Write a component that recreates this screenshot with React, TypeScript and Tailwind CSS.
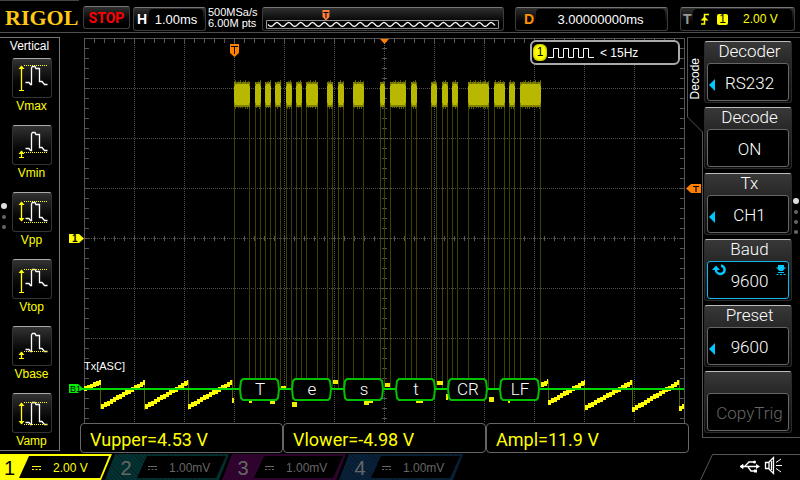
import { ReactNode } from "react";
import clsx from "clsx";

type Measure = {
  label: string;
  top: number;
  bottom: number;
  lines: number[];
  arrow: [number, number];
  double?: boolean;
};

const MEASURES: Measure[] = [
  { label: "Vmax", top: 8, bottom: 27, lines: [7], arrow: [8, 32] },
  { label: "Vmin", top: 7, bottom: 26, lines: [27], arrow: [26, 32] },
  { label: "Vpp", top: 10, bottom: 29, lines: [9, 30], arrow: [10, 29], double: true },
  { label: "Vtop", top: 10, bottom: 27, lines: [10], arrow: [11, 33] },
  { label: "Vbase", top: 7, bottom: 26, lines: [25], arrow: [26, 32] },
  { label: "Vamp", top: 9, bottom: 32, lines: [9, 31], arrow: [10, 31], double: true },
];

const CHANNELS = [
  {
    id: "2",
    hatch: "bg-[repeating-linear-gradient(45deg,#003434_0_2px,#0c2222_2px_3px)]",
  },
  {
    id: "3",
    hatch: "bg-[repeating-linear-gradient(45deg,#340034_0_2px,#220c22_2px_3px)]",
  },
  {
    id: "4",
    hatch: "bg-[repeating-linear-gradient(45deg,#06223c_0_2px,#0c1826_2px_3px)]",
  },
];

// Start and end of every high burst on the trace
const BURSTS = [
  [234, 250], [255, 261], [265, 271], [275, 281], [286, 292], [296, 302], [306, 318],
  [327, 333], [338, 344], [353, 364], [380, 385], [390, 406], [411, 417], [431, 437],
  [442, 448], [452, 458], [468, 489], [494, 505], [509, 515], [520, 541],
];

// x1, y1, x2, y2 of each rising ramp
const RAMPS = [
  [84, 389, 101, 382], [101, 407, 145, 382], [145, 407, 188, 382], [188, 407, 232, 382],
  [541, 385, 548, 382], [548, 403, 585, 382], [585, 408, 632, 382], [632, 410, 679, 382],
  [679, 409, 684, 406],
];

// Bits of the low level that show around the decoded frames
const SCRAPS = [
  [232, 398, 2, 5], [249, 400, 3, 3], [270, 400, 5, 4], [281, 386, 5, 4], [292, 402, 5, 5],
  [333, 380, 5, 4], [364, 401, 5, 4], [369, 400, 4, 3], [385, 383, 5, 4], [416, 400, 7, 3],
  [437, 381, 6, 4], [446, 394, 2, 6], [489, 397, 5, 5], [508, 401, 2, 2],
];

const FRAMES = ["T", "e", "s", "t", "CR", "LF"];

const range = (n: number) => Array.from({ length: n }, (_, i) => i);

function rampPath([x1, y1, x2, y2]: number[]) {
  const step = 3;
  let d = "";
  for (let x = x1; x < x2; x += step) {
    const w = Math.min(step, x2 - x);
    const y = Math.round(y1 + ((y2 - y1) * (x - x1)) / (x2 - x1)) - 3;
    d += `M${x} ${y}h${w}v5h${-w}z`;
  }
  return d;
}

function fringePath([a, b]: number[]) {
  let d = "";
  for (let x = a + 1; x < b; x++) {
    const up = (x * 7) % 5;
    if (up < 3) d += `M${x} ${80 + up}h1v2h-1z`;
    if ((x * 11) % 7 < 3) d += `M${x} 107h1v${1 + (x % 2)}h-1z`;
  }
  return d;
}

function MeasureIcon({ top: t, bottom: b, lines, arrow: [a1, a2], double }: Measure) {
  return (
    <svg viewBox="0 0 38 38" className="w-full h-full" fill="none">
      <g transform="translate(-1 -1)">
        <path
          d={`M13.500 ${b - 2.5}h3.500l1.500 2h1V${t + 2}l1 -1.500h2.500l1 2h3.500V${b - 3.5}h2.500l2.500 3h3`}
          stroke="#fff"
          strokeWidth="1.300"
        />
        {lines.map((y) => (
          <path key={y} d={`M12 ${y + 0.5}H36`} stroke="#ff0" strokeDasharray="1 1" />
        ))}
        <path d={`M9.500 ${a1}V${a2}`} stroke="#ff0" strokeWidth="1.300" />
        <path d={`M6.500 ${a1 + 3}L9.500 ${a1 - 0.5}L12.500 ${a1 + 3}z`} fill="#ff0" />
        {double ? (
          <path d={`M6.500 ${a2 - 3}L9.500 ${a2 + 0.5}L12.500 ${a2 - 3}z`} fill="#ff0" />
        ) : (
          <path d={`M7 ${a2 + 0.5}h5`} stroke="#ff0" />
        )}
      </g>
    </svg>
  );
}

function PageDots({ count, className }: { count: number; className: string }) {
  return (
    <div className={clsx("absolute flex flex-col items-center gap-1.5", className)}>
      {range(count).map((i) => (
        <span key={i} className={clsx("rounded-full", i === 0 ? "size-1.5 bg-[#ddd]" : "size-1 bg-[#666]")} />
      ))}
    </div>
  );
}

function HeaderBox({ className, children }: { className: string; children: ReactNode }) {
  return (
    <div
      className={clsx(
        "flex items-center h-6 rounded-[3px] border border-[#3c3c3c] border-t-[#777] bg-linear-to-b from-[#303030] to-black",
        className
      )}
    >
      {children}
    </div>
  );
}

function Header() {
  return (
    <header className="flex items-start h-[33px] border-b border-[#4c5050] pr-[5px]">
      <div className="w-[79px] mr-1 shrink-0 border-t border-[#444] pt-1 pl-[5px] font-['Liberation_Serif',serif] font-bold text-[22px] leading-[26px] text-[#ffc814]">
        RIGOL
      </div>
      <button className="mt-1.5 w-[47px] h-[23px] shrink-0 rounded-[3px] border border-[#3c3c3c] border-t-[#777] bg-linear-to-b from-[#303030] to-black font-['Roboto',sans-serif] text-[14px] leading-5 font-bold text-[#f00]">
        STOP
      </button>
      <HeaderBox className="mt-[7px] ml-[3px] w-[73px] shrink-0 pl-[3px] pr-0.5">
        <span className="w-3 text-[14px] font-bold">H</span>
        <span className="flex-1 rounded-sm bg-black text-center text-[13px] leading-5 pt-px">1.00ms</span>
      </HeaderBox>
      <div className="mt-[7px] w-14 shrink-0 pl-0.5 text-[11px] leading-[11px] whitespace-nowrap">
        <div>500MSa/s</div>
        <div>6.00M pts</div>
      </div>
      <HeaderBox className="mt-[7px] flex-1 min-w-0 px-[3px]">
        <svg viewBox="266 8 236 21" className="w-full h-[21px]" fill="none">
          <path d="M323 9h7v7l-3.500 3.500L323 16z" fill="#ff7f3f" />
          <path d="M324 11.500h5M326.500 11v6" stroke="#000" />
          <path d="M266.500 19.500h234v8h-234z" fill="#000" stroke="#999" />
          <path
            d={range(230)
              .map((i) => `${i ? "L" : "M"}${268 + i} ${23.5 + 2 * Math.cos(((268 + i - 271) * Math.PI) / 6)}`)
              .join("")}
            stroke="#fff"
            strokeWidth="1.200"
          />
        </svg>
      </HeaderBox>
      <HeaderBox className="mt-[7px] ml-[11px] w-[153px] shrink-0 pl-2 pr-0.5">
        <span className="w-3 text-[14px] font-bold text-[#ff9000]">D</span>
        <span className="flex-1 rounded-sm bg-black text-center text-[13px] leading-5 pt-px">3.00000000ms</span>
      </HeaderBox>
      <HeaderBox className="mt-[7px] ml-3 w-[115px] shrink-0 pl-0.5 pr-0.5">
        <span className="w-2.5 text-[14px] font-bold text-[#999]">T</span>
        <span className="flex flex-1 items-center rounded-sm bg-black h-5 pl-[7px] text-[12px] text-[#ff0]">
          <svg viewBox="0 0 9 12" className="w-[9px] h-3" fill="none">
            <path d="M1 11h3.500V1.500H9" stroke="#ff0" strokeWidth="1.500" />
            <path d="M0.500 7.500L4.500 3.500L8.500 7.500z" fill="#ff0" />
          </svg>
          <span className="ml-2 w-[11px] h-[11px] rounded-xs bg-[#ff0] text-center leading-[11px] text-black">1</span>
          <span className="ml-[15px]">2.00 V</span>
        </span>
      </HeaderBox>
    </header>
  );
}

function MeasurePanel() {
  return (
    <aside className="relative w-[60px] h-[414px] shrink-0 border-t border-r border-b border-[#777]">
      <h2 className="h-5 text-center text-[12px] leading-4">Vertical</h2>
      <div className="flex flex-col items-center gap-[11px] pl-1">
        {MEASURES.map((m) => (
          <button key={m.label} className="flex flex-col items-center text-[12px] leading-4 text-[#ff0]">
            <span className="block size-10 rounded-[3px] border border-[#333] border-t-[#aaa] bg-linear-to-b from-[#333] to-black">
              <MeasureIcon {...m} />
            </span>
            {m.label}
          </button>
        ))}
      </div>
      <PageDots count={3} className="left-px top-[165px]" />
    </aside>
  );
}

function Trace() {
  return (
    <svg viewBox="60 37 627 386" className="block w-full h-auto overflow-visible" fill="none" fontFamily="Liberation Sans, Arial, sans-serif">
      <g shapeRendering="crispEdges">
        <g stroke="#505050" strokeDasharray="1 1">
          {range(11).map((i) => (
            <path key={i} d={`M${134.5 + i * 50} 39V423`} />
          ))}
          {range(7).map((i) => (
            <path key={i} d={`M85 ${88.5 + i * 50}H684`} />
          ))}
        </g>
        <path d="M84.500 423V38.500H684.500V423" stroke="#555" />
        <path
          d={
            range(60).map((i) => `M${84.5 + i * 10} 38v5M${84.5 + i * 10} 236v5`).join("") +
            range(39).map((i) => `M84 ${38.5 + i * 10}h5M680 ${38.5 + i * 10}h5M382 ${38.5 + i * 10}h5`).join("")
          }
          stroke="#555"
        />

        {/* CH1 trace */}
        <path d={BURSTS.map(([a, b]) => `M${a + 0.5} 107V388M${b - 0.5} 107V388`).join("")} stroke="#3f3f00" />
        <path
          d="M100.500 380V409M144.500 380V410M188.500 380V410M232.500 380V402M548.500 380V405M584.500 380V411M632.500 380V412M679.500 380V411"
          stroke="#5a5a00"
        />
        {BURSTS.map(([a, b]) => (
          <g key={a}>
            <path d={`M${a} 82H${b}V107H${a}z`} fill="#808000" />
            <path d={`M${a} 86H${a + 1}V84H${b - 1}V86H${b}V103H${b - 1}V105H${a + 1}V103H${a}z`} fill="#b8b800" />
            <path d={fringePath([a, b])} fill="#5c5c00" />
          </g>
        ))}
        <path d={RAMPS.map(rampPath).join("")} fill="#ff0" />
        <path d={SCRAPS.map(([x, y, w, h]) => `M${x} ${y}h${w}v${h}h${-w}z`).join("")} fill="#ee0" />
      </g>

      {/* decoded bus */}
      <path d="M80 389H684" stroke="#00d800" strokeWidth="2" />
      {FRAMES.map((label, i) => {
        const x = 240 + i * 52;
        return (
          <g key={label}>
            <path
              d={`M${x} 389L${x + 1} 381L${x + 3} 379H${x + 36}L${x + 38} 381L${x + 39} 389L${x + 38} 398L${x + 36} 400H${x + 3}L${x + 1} 398z`}
              fill="#000"
              stroke="#00c000"
              strokeWidth="2"
            />
            <text
              x={x + 20}
              y="395"
              fontSize="17"
              fontFamily="Roboto, sans-serif"
              fontWeight="300"
              fill="#fff"
              textAnchor="middle"
            >
              {label}
            </text>
          </g>
        );
      })}
      <text x="84" y="370" fontSize="11" fill="#fff">
        Tx[ASC]
      </text>

      {/* level and time markers */}
      <path d="M69 384h9l5 4.500l-5 4.500h-9z" fill="#00f000" />
      <text x="70" y="392" fontSize="9" fill="#000">
        B1
      </text>
      <path d="M69 234h10l5 4.500l-5 4.500h-10z" fill="#ff0" />
      <text x="72" y="242" fontSize="10" fontWeight="bold" fill="#000">
        1
      </text>
      <path d="M230 44h9v9l-4.500 4L230 53z" fill="#ff8000" />
      <path d="M231 46.500h7M234.500 46v8" stroke="#000" />
      <path d="M380 39h9l-4.500 5z" fill="#ff8000" />
      <path d="M701 184h-10l-5 4.500l5 4.500h10z" fill="#ff8000" />
      <path d="M693 186.500h6M696 186v6" stroke="#000" strokeWidth="1.200" />
    </svg>
  );
}

function FrequencyCounter() {
  return (
    <div className="absolute top-[3px] right-[7px] flex items-center w-[150px] h-[25px] rounded-md border-2 border-[#aaa] bg-black text-[12px]">
      <span className="ml-px w-[14px] h-[17px] rounded-md bg-[#ff0] text-center leading-[17px] text-black shadow-[inset_0_0_3px_#880]">
        1
      </span>
      <svg viewBox="0 0 46 12" className="ml-px w-[46px] h-3" fill="none">
        <path d="M0 10.500h5.500V1.500h5v9h5v-9h5v9h5v-9h5v9h5v-9h5v9H46" stroke="#fff" />
      </svg>
      <span className="ml-1.5">&lt; 15Hz</span>
    </div>
  );
}

function Softkey({
  title,
  value,
  submenu,
  active,
  disabled,
}: {
  title: string;
  value: string;
  submenu?: boolean;
  active?: boolean;
  disabled?: boolean;
}) {
  return (
    <button
      disabled={disabled}
      className="block w-[88px] h-[62px] rounded-[3px] border border-[#2a2a2a] border-t-[#bbb] bg-linear-to-b from-[#383838] to-[#0c0c0c] px-0.5 font-['Roboto',sans-serif] font-light text-[17px] text-white"
    >
      <span className="block h-[19px] pl-[3px] leading-[14px]">{title}</span>
      <span
        className={clsx(
          "relative flex items-center justify-center h-[38px] rounded-[3px] border bg-black pt-1 pl-[3px]",
          active ? "border-[#10b8f0]" : "border-[#666]",
          disabled && "text-[#666]"
        )}
      >
        {submenu && (
          <svg viewBox="0 0 6 12" className="absolute left-px top-[15px] w-1.5 h-3">
            <path d="M6 0v12L0 6z" fill="#00c8ff" />
          </svg>
        )}
        {active && (
          <>
            <svg viewBox="0 0 14 12" className="absolute left-1 top-0.5 w-3.5 h-3" fill="none">
              <path d="M9 1.500a4.300 4.300 0 1 1 -5 4" stroke="#00c8ff" strokeWidth="2.500" />
              <path d="M0 6L4 1.500L8 6z" fill="#00c8ff" />
            </svg>
            <svg viewBox="0 0 10 11" className="absolute right-0.5 top-[3px] w-2.5 h-[11px]" fill="none">
              <path d="M2 0h6v2.500h2L6.500 6h-3L0 2.500h2z" fill="#00c8ff" />
              <path d="M2 7.500h6M0.500 9.500h2M4 9.500h2M7.500 9.500h2" stroke="#00c8ff" />
            </svg>
          </>
        )}
        {value}
      </span>
    </button>
  );
}

function DecodeMenu() {
  return (
    <aside className="relative flex w-[113px] h-[401px] shrink-0 border-t border-[#444]">
      <div className="relative w-4 h-full shrink-0 pt-5">
        <svg viewBox="0 0 16 400" className="absolute inset-0 w-4 h-full" fill="none">
          <path d="M0.500 0V79L15.500 94V400" stroke="#555" />
        </svg>
        <h2 className="[writing-mode:vertical-rl] rotate-180 text-[12px] leading-4">Decode</h2>
      </div>
      <nav className="flex flex-1 flex-col gap-1 pt-[3px] pl-px border-b border-[#555]">
        <Softkey title="Decoder" value="RS232" submenu />
        <Softkey title="Decode" value="ON" />
        <Softkey title="Tx" value="CH1" submenu />
        <Softkey title="Baud" value="9600" active />
        <Softkey title="Preset" value="9600" submenu />
        <Softkey title="" value="CopyTrig" disabled />
      </nav>
      <PageDots count={4} className="right-px top-[160px]" />
    </aside>
  );
}

function Coupling() {
  return (
    <svg viewBox="0 0 9 5" className="w-[9px] h-[5px] shrink-0" stroke="currentColor">
      <path d="M0 0.500h9M0 3.500h2M3.500 3.500h2M7 3.500h2" />
    </svg>
  );
}

function ChannelBar() {
  return (
    <footer className="flex h-[26px]">
      <button className="flex w-28 shrink-0 bg-[#ff0] py-0.5 text-[12px] text-[#ff0] [clip-path:polygon(0_0,100%_0,calc(100%-11px)_100%,0_100%)]">
        <span className="w-[19px] text-[20px] leading-6 text-black">1</span>
        <span className="flex items-center w-[90px] h-[22px] bg-black pl-[13px] pt-0.5 [clip-path:polygon(10px_0,100%_0,calc(100%-9px)_100%,0_100%)]">
          <Coupling />
          <span className="ml-3 whitespace-nowrap">2.00 V</span>
        </span>
      </button>
      {CHANNELS.map((ch) => (
        <button
          key={ch.id}
          className={clsx(
            "flex w-[124px] -ml-[7px] shrink-0 py-0.5 text-[12px] text-[#666] [clip-path:polygon(10px_0,100%_0,calc(100%-10px)_100%,0_100%)]",
            ch.hatch
          )}
        >
          <span className="w-8 pl-2.5 text-[20px] leading-6">{ch.id}</span>
          <span className="flex items-center w-[89px] h-[22px] bg-black pl-[11px] pt-0.5 [clip-path:polygon(10px_0,100%_0,calc(100%-10px)_100%,0_100%)]">
            <Coupling />
            <span className="ml-3 whitespace-nowrap">1.00mV</span>
          </span>
        </button>
      ))}
      <svg viewBox="700 454 100 26" className="ml-auto w-[100px] h-[26px]" fill="none">
        <path d="M700.500 480L712.500 454.500H800" stroke="#555" />
        {/* usb */}
        <path d="M742 466.500H757M745 466l4 -4h5M748 467l3 4h4" stroke="#fff" strokeWidth="1.300" />
        <path d="M740 466.500l3 -2v4z" fill="#fff" stroke="#fff" />
        <path d="M756 464l4 2.500l-4 2.500z" fill="#fff" />
        <circle cx="754.500" cy="462" r="1.500" fill="#fff" />
        <path d="M754 469.500h3v3h-3z" fill="#fff" />
        {/* speaker */}
        <path d="M765.500 462.500v6h3l5 5v-16l-5 5zM769 462v7M771.500 461v9" stroke="#fff" strokeWidth="1.300" />
        <path d="M776 462.500l5 -3.500M776 465.500h6M776 468.500l5 3.500" stroke="#fff" />
      </svg>
    </footer>
  );
}

export default function App() {
  return (
    <div className="min-h-screen flex flex-col overflow-hidden bg-black text-white font-['Liberation_Sans',Arial,sans-serif]">
      <Header />
      <main className="flex flex-1 pt-1 pb-px">
        <MeasurePanel />
        <section className="relative flex-1 min-w-0">
          <Trace />
          <FrequencyCounter />
          <div className="relative flex ml-5 -mr-0.5 h-[30px] font-['Roboto',sans-serif] text-[18px] text-[#ff0]">
            {["Vupper=4.53 V", "Vlower=-4.98 V", "Ampl=11.9 V"].map((text) => (
              <div key={text} className="flex flex-1 items-center rounded-[4px] border border-[#666] bg-black pl-[9px] pt-0.5 whitespace-nowrap">
                {text}
              </div>
            ))}
          </div>
        </section>
        <DecodeMenu />
      </main>
      <ChannelBar />
    </div>
  );
}
